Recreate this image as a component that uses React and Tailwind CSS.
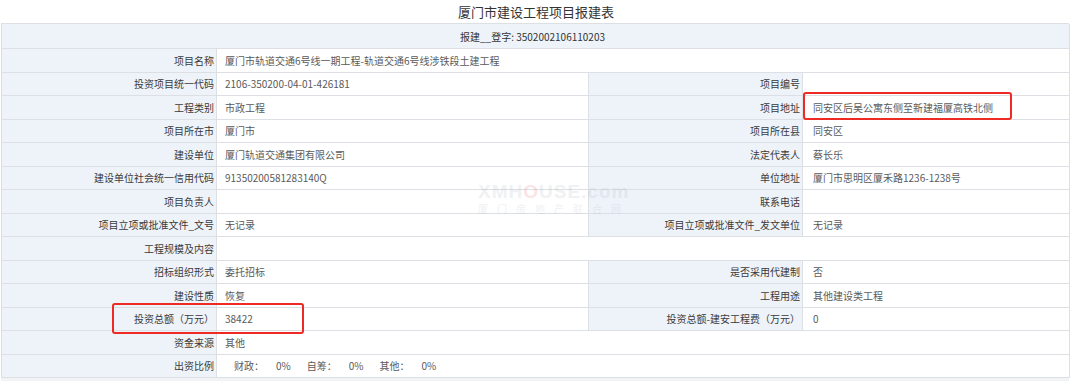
import React from "react";

const L = "bg-[#eef3f9] text-right pr-[2px] text-[#3a3a3a] border-r border-b border-[#dcdfe3] flex items-center justify-end whitespace-nowrap";
const V = "bg-white text-[#5a5a5a] pl-[8px] border-r border-b border-[#dcdfe3] flex items-center whitespace-nowrap";

function Row({ a, b, c, d, full }) {
  if (full) {
    return (
      <>
        <div className={L + " h-[23.5px]"}>{a}</div>
        <div className={V + " col-span-3 h-[23.5px]"}>{b}</div>
      </>
    );
  }
  return (
    <>
      <div className={L + " h-[23.5px]"}>{a}</div>
      <div className={V + " h-[23.5px]"}>{b}</div>
      <div className={L + " h-[23.5px]"}>{c}</div>
      <div className={V + " h-[23.5px] pl-[10px]"}>{d}</div>
    </>
  );
}

export default function App() {
  return (
    <div
      className="relative w-[1080px] h-[389px] bg-white overflow-hidden text-[10px]"
      style={{ fontFamily: '"Noto Sans CJK SC", "Noto Sans", sans-serif' }}
    >
      <div className="h-[23px] flex items-center justify-center text-[13px] text-[#333] pr-[8px]">
        厦门市建设工程项目报建表
      </div>
      <div className="ml-[1px] w-[1068px] grid grid-cols-[215px_372px_214px_267px] border-l border-t border-[#dcdfe3]">
        <div className="col-span-4 h-[25px] bg-[#eef3f9] border-r border-b border-[#dcdfe3] flex items-center justify-center text-[#333] pr-[6px]">
          报建__登字: 3502002106110203
        </div>
        <Row full a="项目名称" b="厦门市轨道交通6号线一期工程-轨道交通6号线涉铁段土建工程" />
        <Row a="投资项目统一代码" b="2106-350200-04-01-426181" c="项目编号" d="" />
        <Row a="工程类别" b="市政工程" c="项目地址" d="同安区后吴公寓东侧至新建福厦高铁北侧" />
        <Row a="项目所在市" b="厦门市" c="项目所在县" d="同安区" />
        <Row a="建设单位" b="厦门轨道交通集团有限公司" c="法定代表人" d="蔡长乐" />
        <Row a="建设单位社会统一信用代码" b="91350200581283140Q" c="单位地址" d="厦门市思明区厦禾路1236-1238号" />
        <Row a="项目负责人" b="" c="联系电话" d="" />
        <Row a="项目立项或批准文件_文号" b="无记录" c="项目立项或批准文件_发文单位" d="无记录" />
        <Row full a="工程规模及内容" b="" />
        <Row a="招标组织形式" b="委托招标" c="是否采用代建制" d="否" />
        <Row a="建设性质" b="恢复" c="工程用途" d="其他建设类工程" />
        <Row a="投资总额（万元）" b="38422" c="投资总额-建安工程费（万元）" d="0" />
        <Row full a="资金来源" b="其他" />
        <Row
          full
          a="出资比例"
          b={
            <span className="pl-[9px] flex items-center">
              <span>财政：</span>
              <span className="ml-[12px]">0%</span>
              <span className="ml-[16px]">自筹：</span>
              <span className="ml-[12px]">0%</span>
              <span className="ml-[16px]">其他：</span>
              <span className="ml-[12px]">0%</span>
            </span>
          }
        />
      </div>
      <div className="ml-[1px] w-[1068px] h-[3px] bg-[#f1f3f5]" />

      {/* watermark */}
      <div className="absolute left-[478px] top-[182px] pointer-events-none select-none opacity-[0.15]">
        <div
          className="text-[19px] font-bold leading-[20px] tracking-[1px] text-[#9aa4b4]"
          style={{ fontFamily: '"Liberation Sans", sans-serif' }}
        >
          XMH<span className="text-[#e05050]">O</span>USE.com
        </div>
        <div className="text-[10px] leading-[12px] tracking-[9px] text-[#9aa4b4] mt-[1px]">厦门房地产联合网</div>
      </div>

      {/* red annotation boxes */}
      <div className="absolute left-[803px] top-[92px] w-[209px] h-[28px] border-2 border-[#ee2a24] rounded-[3px] pointer-events-none" />
      <div className="absolute left-[112px] top-[303px] w-[192px] h-[31px] border-2 border-[#ee2a24] rounded-[3px] pointer-events-none" />
    </div>
  );
}
